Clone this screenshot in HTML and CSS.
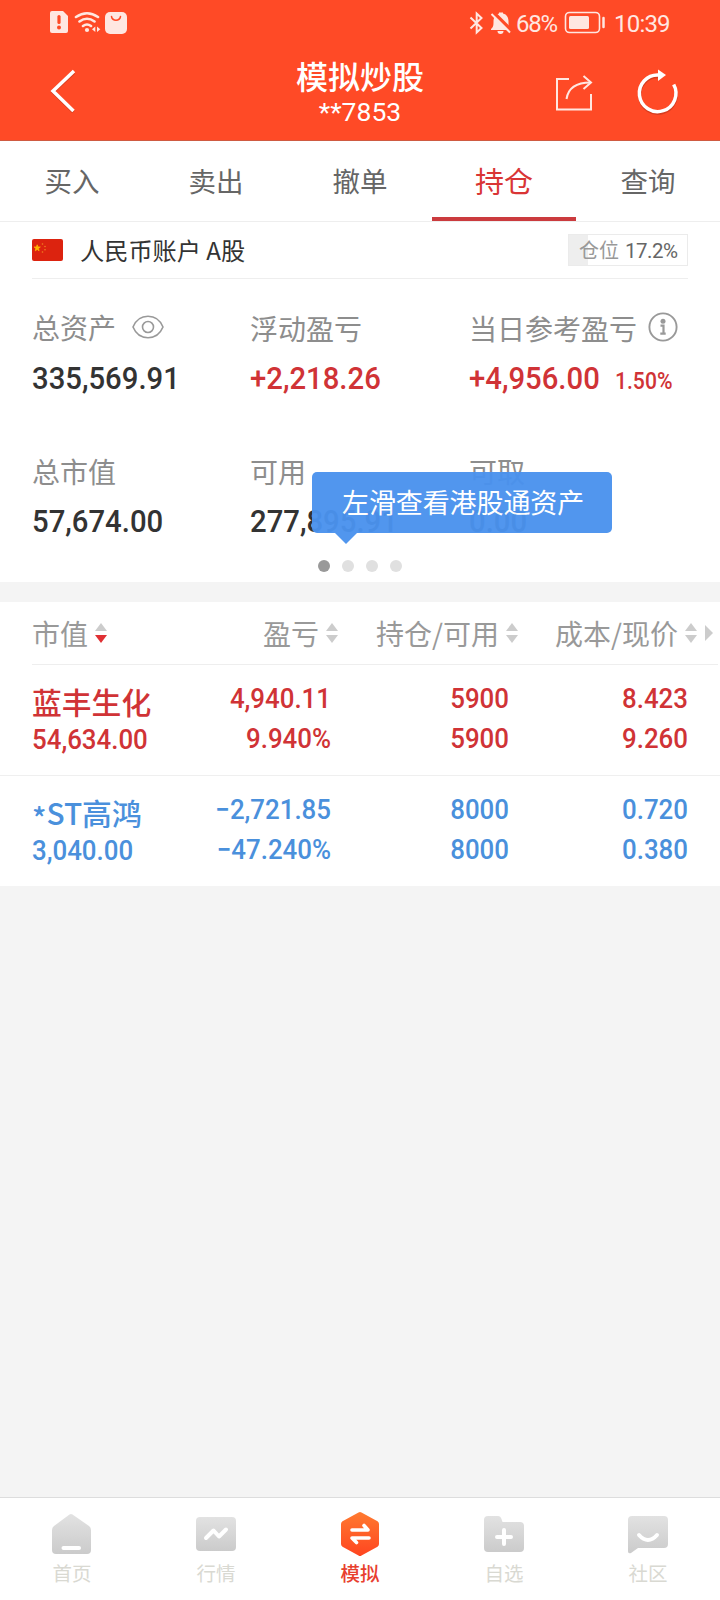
FILE: index.html
```html
<!DOCTYPE html>
<html lang="zh-CN">
<head>
<meta charset="utf-8">
<title>模拟炒股</title>
<link rel="stylesheet" href="styles.css">
</head>
<body>
<div class="screen">
  <header class="header">
    <div class="status">
      <svg class="status-left" viewBox="48 8 82 30" width="82" height="30">
        <path d="M52 11h11l5 5v15a2 2 0 0 1-2 2H52a2 2 0 0 1-2-2V13a2 2 0 0 1 2-2z" fill="#ffe7e1"/>
        <path d="M59 16.500v6" stroke="#ff4a26" stroke-width="3.200" stroke-linecap="round"/><circle cx="59" cy="27.500" r="2" fill="#ff4a26"/>
        <g fill="none" stroke="#ffe7e1" stroke-width="2.600" stroke-linecap="round"><path d="M76 17q11-7.500 22 0M79.500 21.500q7.500-5.500 15 0M83 26q4-3 8 0"/></g>
        <circle cx="87" cy="30" r="2.100" fill="#ffe7e1"/>
        <path d="M95.300 26.500v5.500l-3.300-2.800zM97 26.500v5.500l3.300-2.800z" fill="#ffe7e1"/>
        <rect x="105" y="12" width="22" height="22" rx="5" fill="#ffe7e1"/>
        <path d="M111.500 16.500c1 5 8 5 9 0" fill="none" stroke="#ff4a26" stroke-width="1.500" stroke-linecap="round"/>
      </svg>
      <svg class="status-right" viewBox="466 8 48 30" width="48" height="30">
        <path d="M470.500 17.500l11 10.500-4.800 4.500v-19l4.800 4.500-11 10.500" fill="none" stroke="#ffe7e1" stroke-width="2"/>
        <path d="M491 30v-1c2.500-2 2.500-4 2.500-7.500 0-4.500 2.500-7 5.500-8v-1h4v1c4 1 5.500 4 5.500 8 0 4 0 5.500 1.500 7.500v1z" fill="#ffe7e1"/>
        <path d="M497.500 31h6a3 3 0 0 1-6 0z" fill="#ffe7e1"/>
        <path d="M493.500 12.500l18 18" stroke="#ff4a26" stroke-width="3.500"/><path d="M491.500 14l18.500 18.500" stroke="#ffe7e1" stroke-width="2"/>
      </svg>
      <span class="status-text pct">68%</span>
      <svg class="battery" viewBox="564 12 42 24" width="42" height="24">
        <rect x="565.500" y="13.500" width="34" height="20" rx="4" fill="none" stroke="#ffe7e1" stroke-width="1.600"/>
        <rect x="569" y="17" width="20" height="13" rx="1.500" fill="#ffe7e1"/>
        <path d="M603.500 19v9" stroke="#ffe7e1" stroke-width="2.500" stroke-linecap="round"/>
      </svg>
      <span class="status-text">10:39</span>
    </div>
    <div class="titlebar">
      <svg class="back" viewBox="48 66 30 50" width="30" height="50"><path d="M74 71.500L53 91l20.500 20" fill="none" stroke="#a32c16" stroke-opacity=".4" stroke-width="3.500" transform="translate(0 1)"/><path d="M74 71L53 91l20.500 20" fill="none" stroke="#fff" stroke-width="3.500"/></svg>
      <div class="titles"><h1>模拟炒股</h1><p>**7853</p></div>
      <svg class="share" viewBox="552 70 44 46" width="44" height="46"><g fill="none" stroke="#ffe7e1" stroke-width="2"><path d="M569 79h-12v30.500h34V94"/><path d="M566.500 99c1.500-10 9-16.500 24-16.500"/><path d="M583.500 76l7.500 6.500-7.500 6.500"/></g></svg>
      <svg class="refresh" viewBox="634 66 48 52" width="48" height="52"><path d="M659.500 75.500a18.300 18.300 0 1 0 15.500 10" fill="none" stroke="#a32c16" stroke-opacity=".45" stroke-width="3.300" transform="translate(-.8 1.200)"/><path d="M658.700 75a18.300 18.300 0 1 0 15 9.500" fill="none" stroke="#fff" stroke-width="3.500"/><path d="M658 69.500l8 5.500-8 6z" fill="#fff"/></svg>
    </div>
  </header>

  <nav class="tabs">
    <span>买入</span><span>卖出</span><span>撤单</span><span class="active">持仓</span><span>查询</span>
  </nav>

  <section class="account">
    <svg class="flag" viewBox="0 0 31 22" width="31" height="22"><rect width="31" height="22" rx="2" fill="#dc230f"/><path d="M5.200 5.800l.8 2.200h2.300l-1.800 1.500.6 2.300-1.900-1.400-1.900 1.400.6-2.300-1.800-1.500h2.300z" fill="#ffb400" stroke="#ffb400" stroke-width=".8"/><g fill="#f08020"><circle cx="10.500" cy="5" r=".8"/><circle cx="13" cy="7.500" r=".8"/><circle cx="13" cy="10.800" r=".8"/><circle cx="10.500" cy="13" r=".8"/></g></svg>
    <span class="account-name">人民币账户 A股</span>
    <div class="ratio"><span class="ratio-label">仓位</span><span class="ratio-num">17.2%</span></div>
  </section>

  <section class="assets">
    <div class="stats">
      <div class="stat"><div class="label">总资产<svg class="eye" viewBox="0 0 32 24" width="32" height="24"><g fill="none" stroke="#999" stroke-width="1.600"><path d="M1 12C7-2.300 25-2.300 31 12 25 26.300 7 26.300 1 12z"/><circle cx="16" cy="12" r="5.500"/></g></svg></div><div class="value"><b class="num">335,569.91</b></div></div>
      <div class="stat"><div class="label lowered">浮动盈亏</div><div class="value up"><b class="num">+2,218.26</b></div></div>
      <div class="stat"><div class="label lowered">当日参考盈亏<svg class="info" viewBox="0 0 30 30" width="30" height="30"><circle cx="15" cy="15" r="13.600" fill="none" stroke="#999" stroke-width="1.900"/><circle cx="15" cy="9.300" r="2.500" fill="#999"/><path d="M12.500 13.700h3v8M12.300 21.600h5.400" fill="none" stroke="#999" stroke-width="2.200"/></svg></div><div class="value up"><b class="num">+4,956.00</b><b class="num rate">1.50%</b></div></div>
      <div class="stat"><div class="label">总市值</div><div class="value"><b class="num">57,674.00</b></div></div>
      <div class="stat"><div class="label">可用</div><div class="value"><b class="num">277,895.91</b></div></div>
      <div class="stat"><div class="label">可取</div><div class="value"><b class="num">0.00</b></div></div>
    </div>
    <div class="dots"><i class="on"></i><i></i><i></i><i></i></div>
    <div class="tip">左滑查看港股通资产</div>
  </section>

  <section class="holdings">
    <div class="thead">
      <div class="th first">市值<svg class="sort desc" viewBox="0 0 12 20"><path d="M0 8L6 0l6 8z"/><path class="lower" d="M0 12l6 8 6-8z"/></svg></div>
      <div class="th">盈亏<svg class="sort" viewBox="0 0 12 20"><path d="M0 8L6 0l6 8z"/><path d="M0 12l6 8 6-8z"/></svg></div>
      <div class="th">持仓/可用<svg class="sort" viewBox="0 0 12 20"><path d="M0 8L6 0l6 8z"/><path d="M0 12l6 8 6-8z"/></svg></div>
      <div class="th">成本/现价<svg class="sort" viewBox="0 0 12 20"><path d="M0 8L6 0l6 8z"/><path d="M0 12l6 8 6-8z"/></svg></div>
      <svg class="more" viewBox="0 0 8 16" width="8" height="16"><path d="M0 0l8 8-8 8z" fill="#ccc"/></svg>
    </div>
    <div class="row up">
      <div class="cell name"><strong>蓝丰生化</strong><b class="num">54,634.00</b></div>
      <div class="cell"><b class="num">4,940.11</b><b class="num">9.940%</b></div>
      <div class="cell"><b class="num">5900</b><b class="num">5900</b></div>
      <div class="cell"><b class="num">8.423</b><b class="num">9.260</b></div>
    </div>
    <div class="row down">
      <div class="cell name"><strong><span class="star">*</span>ST高鸿</strong><b class="num">3,040.00</b></div>
      <div class="cell"><b class="num">−2,721.85</b><b class="num">−47.240%</b></div>
      <div class="cell"><b class="num">8000</b><b class="num">8000</b></div>
      <div class="cell"><b class="num">0.720</b><b class="num">0.380</b></div>
    </div>
  </section>

  <footer class="nav">
    <svg width="0" height="0" class="defs"><defs>
      <linearGradient id="gray" x1="0" y1="0" x2="0" y2="1"><stop offset="0" stop-color="#e2e2e2"/><stop offset="1" stop-color="#cbcbcb"/></linearGradient>
      <linearGradient id="orange" x1="0" y1="0" x2="0" y2="1"><stop offset="0" stop-color="#ff7a30"/><stop offset="1" stop-color="#ff4520"/></linearGradient>
    </defs></svg>
    <div class="item"><svg viewBox="48 1508 48 52"><path d="M69.500 1514.500q1.500-1 3 0L89 1526q2 1.500 2 4v20q0 4-4 4H56q-4 0-4-4v-20q0-2.500 2-4z" fill="url(#gray)"/><path d="M63.500 1548h15.500" stroke="#fff" stroke-width="4" stroke-linecap="round"/></svg><span>首页</span></div>
    <div class="item"><svg viewBox="192 1508 48 52"><rect x="196" y="1517" width="40" height="34" rx="4" fill="url(#gray)"/><path d="M206 1538l7.500-7.500 5.500 6 7-7" fill="none" stroke="#fff" stroke-width="4" stroke-linecap="round" stroke-linejoin="round"/></svg><span>行情</span></div>
    <div class="item active"><svg viewBox="336 1508 48 52"><path d="M358.500 1512.500q1.500-1 3 0l16 8.800q1.500 1 1.500 2.700v20q0 1.700-1.500 2.700l-16 8.800q-1.500 1-3 0l-16-8.800q-1.500-1-1.500-2.700v-20q0-1.700 1.500-2.700z" fill="url(#orange)"/><path d="M352 1530h16l-4-4.500M369 1538h-17l4.500 4.500" fill="none" stroke="#fff" stroke-width="3.600" stroke-linecap="round" stroke-linejoin="round"/></svg><span>模拟</span></div>
    <div class="item"><svg viewBox="480 1508 48 52"><path d="M488 1516h10q2.500 0 3.500 3l1 3h17.500q4 0 4 4v22q0 4-4 4h-32q-4 0-4-4v-28q0-4 4-4z" fill="url(#gray)"/><path d="M504 1530v14M497 1537h14" stroke="#fff" stroke-width="4" stroke-linecap="round"/></svg><span>自选</span></div>
    <div class="item"><svg viewBox="624 1508 48 52"><path d="M632 1516h32q4 0 4 4v24q0 4-4 4h-26l-7 5q-3 1-3-1.500v-31.500q0-4 4-4z" fill="url(#gray)"/><path d="M639 1535q9 10 18 0" fill="none" stroke="#fff" stroke-width="4" stroke-linecap="round"/></svg><span>社区</span></div>
  </footer>
</div>
</body>
</html>
```

FILE: styles.css
```css
* { box-sizing: border-box; }
body { margin: 0; font-family: "Noto Sans CJK SC", sans-serif; }
svg { display: block; flex: none; }
h1, p { margin: 0; font-weight: 400; }
i { font-style: normal; }
.screen { width: 720px; height: 1600px; background: #f4f4f4; display: flex; flex-direction: column; overflow: hidden; }

.header { height: 141px; background: #ff4a26; border-bottom: 1px solid #cf5a41; color: #fff; flex: none; }
.status { height: 46px; padding: 0 49px 0 48px; display: flex; align-items: center; }
.status-right { margin-left: auto; }
.status-text { font: 400 24px/46px Roboto, sans-serif; color: #ffe7e1; letter-spacing: -.8px; width: 57px; white-space: nowrap; padding-top: 2px; }
.status-text.pct { width: 48px; margin-left: 2px; font-size: 24px; letter-spacing: -1.3px; }
.battery { margin-right: 8px; }
.titlebar { height: 94px; padding: 0 38px 0 48px; display: flex; align-items: center; }
.back { margin-top: -4px; }
.titles { margin-left: 182px; width: 200px; text-align: center; margin-top: -5px; }
.titles h1 { font-size: 32px; line-height: 42px; font-weight: 500; }
.titles p { font: 400 26.500px/32px Roboto, sans-serif; }
.share { margin-left: 92px; }
.refresh { margin-left: auto; margin-top: -2px; }

.tabs { height: 81px; flex: none; background: #fff; display: grid; grid-template-columns: repeat(5, 1fr); border-bottom: 1px solid #eee; font-size: 27.500px; line-height: 79px; color: #666; text-align: center; }
.tabs .active { color: #d93535; font-size: 29px; box-shadow: inset 0 -4px #cb3b3e; }

.account { height: 57px; flex: none; background: linear-gradient(#eee, #eee) 32px 56px / 656px 1px no-repeat #fff; padding: 0 32px 2px; display: flex; align-items: center; }
.account-name { margin-left: 17px; font-size: 24.200px; line-height: 54px; color: #333; }
.ratio { margin-left: auto; width: 120px; height: 32px; border: 1px solid #ebebeb; background: linear-gradient(90deg, #eee 19px, #fff 19px); display: flex; font-size: 20px; line-height: 30px; color: #999; padding-left: 10px; }
.ratio-num { font-family: Roboto, sans-serif; color: #666; margin-left: 6px; line-height: 32px; font-size: 20.500px; letter-spacing: -.5px; }

.assets { position: relative; height: 303px; flex: none; background: #fff; padding: 30px 32px 0; }
.stats { display: grid; grid-template-columns: 218px 219px 219px; grid-template-rows: 143px 85px; }
.label { height: 36px; display: flex; align-items: center; font-size: 28px; line-height: 36px; color: #8d8d8d; white-space: nowrap; }
.label.lowered { padding-top: 1px; }
.stat:nth-child(n+4) .label { padding-top: 2px; }
.eye { margin-left: 16px; }
.info { margin-left: 11px; margin-top: -2px; }
.value { height: 40px; margin-top: 13px; display: flex; align-items: baseline; color: #333; white-space: nowrap; }
.num { display: block; font-family: Roboto, sans-serif; font-weight: 500; transform-origin: 0 50%; }
.value .num { font-size: 32px; line-height: 40px; transform: scaleX(.915); }
.value .rate { font-size: 24px; margin-left: 3px; transform: scaleX(.88); }
.up, .value.up { color: #d03336; }
.down { color: #4a90dc; }
.dots { display: flex; justify-content: center; gap: 12px; margin-top: 23px; }
.dots i { width: 12px; height: 12px; border-radius: 50%; background: #e0e0e0; }
.dots .on { background: #999; }
.tip { position: absolute; left: 312px; top: 193px; width: 300px; height: 61px; border-radius: 5px; background: #4a92ee; opacity: .96; color: #fff; font-size: 27px; line-height: 59px; padding-left: 30px; letter-spacing: -.1px; white-space: nowrap; }
.tip::after { content: ""; position: absolute; left: 23px; top: 61px; border: 11px solid transparent; border-top-color: #4a92ee; border-bottom: 0; }

.holdings { margin-top: 20px; height: 284px; flex: none; background: #fff; }
.thead, .row { display: grid; grid-template-columns: 130px 176px 180px 179px auto; padding-left: 32px; }
.thead { height: 63px; align-items: center; background: linear-gradient(#eee, #eee) 32px 62px / 686px 1px no-repeat; }
.th { display: flex; align-items: center; justify-content: flex-end; font-size: 28px; line-height: 60px; height: 62px; padding-bottom: 2px; color: #999; white-space: nowrap; }
.th.first { justify-content: flex-start; }
.sort { width: 12px; height: 20px; margin-left: 7px; fill: #ccc; }
.sort.desc .lower { fill: #e03034; }
.more { margin-left: 8px; margin-top: -2px; }
.row { height: 111px; padding-top: 14px; border-bottom: 1px solid #efefef; }
.row:last-child { height: 110px; border-bottom: 0; }
.cell { text-align: right; padding-right: 7px; white-space: nowrap; }
.cell:nth-child(3) { padding-right: 9px; }
.cell:nth-child(4) { padding-right: 9px; }
.cell .num { font-size: 27.500px; line-height: 40px; transform: scaleX(.94); transform-origin: 100% 50%; }
.cell.name { text-align: left; padding: 4px 0 0; }
.cell.name strong { display: block; font-size: 29.800px; line-height: 37px; height: 37px; font-weight: 500; }
.cell.name .num { transform-origin: 0 50%; }
.star { position: relative; top: 5px; }

.nav { margin-top: auto; height: 103px; flex: none; background: #fff; border-top: 1px solid #ddd; display: grid; grid-template-columns: repeat(5, 1fr); }
.defs { position: absolute; }
.item { display: flex; flex-direction: column; align-items: center; padding-top: 10px; color: #d9d9d2; font-size: 19.500px; line-height: 26px; }
.item svg { width: 48px; height: 52px; }
.item.active { color: #e8402e; font-weight: 500; }
```
